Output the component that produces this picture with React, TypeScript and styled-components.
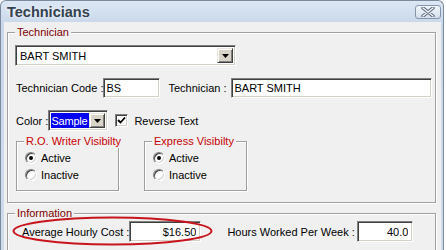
import React from 'react'
import styled, { createGlobalStyle } from 'styled-components'

const GlobalStyle = createGlobalStyle`
  html, body {
    margin: 0;
    padding: 0;
    background: #fff;
  }
  body {
    font-family: 'Liberation Sans', Arial, sans-serif;
    font-size: 11px;
    color: #000;
  }
`

const Window = styled.div`
  width: 444px;
  height: 250px;
  box-sizing: border-box;
  border: 1px solid #7b8a9c;
  border-bottom: none;
  border-radius: 6px 6px 0 0;
  background: linear-gradient(#dce7f4, #c9d8ea 22px, #cfdcec);
  display: flex;
  flex-direction: column;
  overflow: hidden;
`

const TitleBar = styled.div`
  flex: 0 0 21px;
  display: flex;
  align-items: center;
  justify-content: space-between;
  padding: 0 2px 0 6px;
`

const Title = styled.div`
  font-size: 14.5px;
  font-weight: bold;
  color: #34414e;
  text-shadow: 0 0 4px rgba(255, 255, 255, 0.9);
`

const CloseButton = styled.div`
  width: 26px;
  height: 14px;
  box-sizing: border-box;
  border: 1px solid #8596ab;
  border-radius: 3px;
  background: linear-gradient(#f1f5fa, #d4dfec);
  display: flex;
  align-items: center;
  justify-content: center;
`

const Body = styled.div`
  flex: 1;
  margin: 0 2px 0 3px;
  padding: 4px 5px 0 3px;
  background: #f0f0f0;
  display: flex;
  flex-direction: column;
`

const Group = styled.fieldset<{ $width?: number; $top?: number }>`
  margin: ${p => p.$top || 0}px 0 0;
  padding: 0;
  min-width: 0;
  width: ${p => (p.$width ? `${p.$width}px` : 'auto')};
  box-sizing: border-box;
  border: 1px solid #a0a0a0;
  box-shadow: inset 1px 1px #fff, 1px 1px #fff;
`

const Legend = styled.legend<{ $bright?: boolean }>`
  margin-left: 7px;
  padding: 0 2px;
  line-height: 13px;
  white-space: nowrap;
  color: ${p => (p.$bright ? '#c80000' : '#800000')};
  background: #f0f0f0;
`

const GroupBody = styled.div<{ $pad: string }>`
  position: relative;
  display: flex;
  flex-direction: column;
  align-items: flex-start;
  padding: ${p => p.$pad};
`

const Row = styled.div<{ $top?: number; $h?: number }>`
  display: flex;
  align-items: center;
  margin-top: ${p => p.$top || 0}px;
  height: ${p => (p.$h ? `${p.$h}px` : 'auto')};
`

const Label = styled.span<{ $w: number; $left?: number }>`
  flex: 0 0 ${p => p.$w}px;
  margin-left: ${p => p.$left || 0}px;
  white-space: nowrap;
`

const sunken = `
  box-sizing: border-box;
  background: #fff;
  border: 1px solid;
  border-color: #808080 #fff #fff #808080;
  box-shadow: inset 1px 1px #404040, inset -1px -1px #d4d0c8;
`

const Field = styled.input<{ $w: number; $h?: number; $right?: boolean }>`
  ${sunken}
  flex-shrink: 0;
  width: ${p => p.$w}px;
  height: ${p => p.$h || 20}px;
  padding: 0 ${p => (p.$right ? 4 : 2)}px 0 2px;
  margin: 0;
  font: inherit;
  color: #000;
  outline: none;
  text-align: ${p => (p.$right ? 'right' : 'left')};
`

const Combo = styled.div<{ $w: number }>`
  ${sunken}
  flex-shrink: 0;
  width: ${p => p.$w}px;
  height: 21px;
  display: flex;
  align-items: stretch;
  padding: 2px;
`

const ComboText = styled.div<{ $selected?: boolean }>`
  flex: 1;
  min-width: 0;
  overflow: hidden;
  white-space: nowrap;
  display: flex;
  align-items: center;
  padding-left: ${p => (p.$selected ? 0 : 2)}px;
  letter-spacing: ${p => (p.$selected ? '-0.2px' : '0')};
  background: ${p => (p.$selected ? '#0000f0' : '#fff')};
  color: ${p => (p.$selected ? '#fff' : '#000')};
`

const DropButton = styled.div`
  flex: 0 0 16px;
  box-sizing: border-box;
  background: #d8d4c8;
  border: 1px solid;
  border-color: #e8e6de #404040 #404040 #e8e6de;
  box-shadow: inset 1px 1px #fff, inset -1px -1px #808080;
  display: flex;
  align-items: center;
  justify-content: center;
`

const CheckBox = styled.div`
  ${sunken}
  flex: 0 0 13px;
  width: 13px;
  height: 13px;
  margin-left: 7px;
  display: flex;
  align-items: center;
  justify-content: center;
`

const CheckText = styled.span`
  margin-left: 6px;
`

const SubGroups = styled.div`
  display: flex;
  gap: 25px;
  margin-top: 4px;
  margin-left: 1px;
`

const RadioRow = styled.div`
  display: flex;
  align-items: center;
  height: 17px;
`

const Radio = styled.div<{ $on?: boolean }>`
  width: 12px;
  height: 12px;
  box-sizing: border-box;
  border-radius: 50%;
  background: #fff;
  border: 1px solid;
  border-color: #808080 #fff #fff #808080;
  box-shadow: inset 1px 1px #404040, inset -1px -1px #d4d0c8;
  margin-right: 4px;
  display: flex;
  align-items: center;
  justify-content: center;

  &::after {
    content: '';
    display: ${p => (p.$on ? 'block' : 'none')};
    width: 4px;
    height: 4px;
    border-radius: 50%;
    background: #000;
  }
`

const Highlight = styled.svg`
  position: absolute;
  left: 4px;
  top: -4px;
  pointer-events: none;
`

const Arrow = () => (
  <svg width="7" height="4" viewBox="0 0 7 4">
    <polygon points="0,0 7,0 3.5,4" fill="#000" />
  </svg>
)

const VisibilityGroup = ({ title }: { title: string }) => (
  <Group $width={103}>
    <Legend $bright>{title}</Legend>
    <GroupBody $pad="1px 0 7px 8px">
      <RadioRow>
        <Radio $on />
        Active
      </RadioRow>
      <RadioRow>
        <Radio />
        Inactive
      </RadioRow>
    </GroupBody>
  </Group>
)

export default function App() {
  return (
    <>
      <GlobalStyle />
      <Window>
        <TitleBar>
          <Title>Technicians</Title>
          <CloseButton>
            <svg width="14" height="10" viewBox="0 0 14 10">
              <path d="M2 1 L12 9 M12 1 L2 9" stroke="#5d6c7f" strokeWidth="3.4" strokeLinecap="round" />
              <path d="M2 1 L12 9 M12 1 L2 9" stroke="#f4f7fb" strokeWidth="1.4" strokeLinecap="round" />
            </svg>
          </CloseButton>
        </TitleBar>
        <Body>
          <Group>
            <Legend>Technician</Legend>
            <GroupBody $pad="6px 3px 11px 7px">
              <Combo $w={221}>
                <ComboText>BART SMITH</ComboText>
                <DropButton>
                  <Arrow />
                </DropButton>
              </Combo>
              <Row $top={12}>
                <Label $w={87} $left={1}>Technician Code :</Label>
                <Field $w={57} readOnly defaultValue="BS" />
                <Label $w={63} $left={8}>Technician :</Label>
                <Field $w={201} readOnly defaultValue="BART SMITH" />
              </Row>
              <Row $top={12} $h={21}>
                <Label $w={32} $left={1}>Color :</Label>
                <Combo $w={60}>
                  <ComboText $selected>Sample</ComboText>
                  <DropButton>
                    <Arrow />
                  </DropButton>
                </Combo>
                <CheckBox>
                  <svg width="9" height="9" viewBox="0 0 9 9">
                    <path d="M1 4 L3.5 6.5 L8 1.5" stroke="#000" strokeWidth="1.8" fill="none" />
                  </svg>
                </CheckBox>
                <CheckText>Reverse Text</CheckText>
              </Row>
              <SubGroups>
                <VisibilityGroup title="R.O. Writer Visibilty" />
                <VisibilityGroup title="Express Visibilty" />
              </SubGroups>
            </GroupBody>
          </Group>
          <Group $top={4}>
            <Legend>Information</Legend>
            <GroupBody $pad="1px 3px 8px 14px">
              <Row>
                <Label $w={106}>Average Hourly Cost :</Label>
                <Field $w={72} $h={21} $right readOnly defaultValue="$16.50" />
                <Label $w={130} $left={26}>Hours Worked Per Week :</Label>
                <Field $w={56} $h={21} $right readOnly defaultValue="40.0" />
              </Row>
              <Highlight width="201" height="30" viewBox="0 0 201 30">
                <ellipse cx="100.5" cy="15" rx="99" ry="13.5" fill="none" stroke="#c8141c" strokeWidth="2" />
              </Highlight>
            </GroupBody>
          </Group>
        </Body>
      </Window>
    </>
  )
}
